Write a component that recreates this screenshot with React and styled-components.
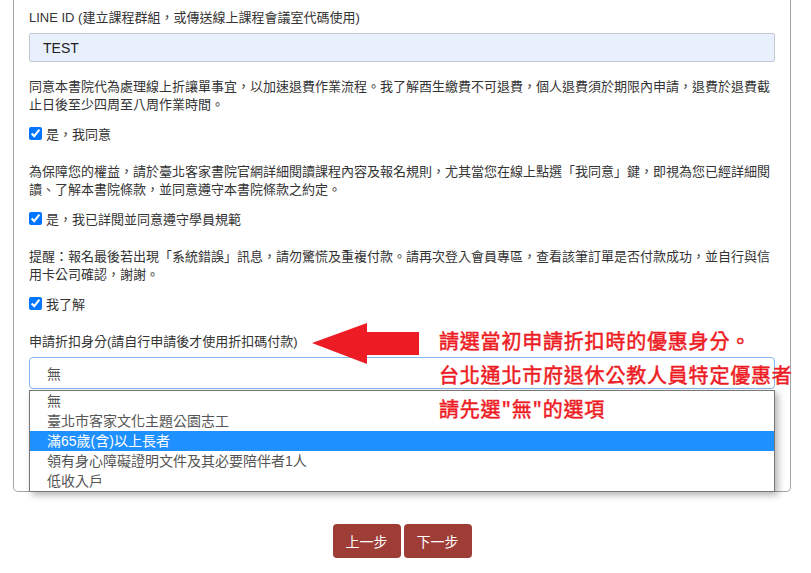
import React from 'react'
import styled, { createGlobalStyle } from 'styled-components'

const GlobalStyle = createGlobalStyle`
body {
  margin: 0;
  background: #fff;
  font-family: "Liberation Sans", "Noto Sans CJK TC", sans-serif;
  color: #333;
}
`

const options = [
  '無',
  '臺北市客家文化主題公園志工',
  '滿65歲(含)以上長者',
  '領有身心障礙證明文件及其必要陪伴者1人',
  '低收入戶',
]

const App = () => {
  return (
    <Page>
      <GlobalStyle />
      <Card>
        <Group>
          <Label>LINE ID (建立課程群組，或傳送線上課程會議室代碼使用)</Label>
          <TextInput defaultValue="TEST" />
        </Group>

        <Notice>
          同意本書院代為處理線上折讓單事宜，以加速退費作業流程。我了解酉生繳費不可退費，個人退費須於期限內申請，退費於退費截止日後至少四周至八周作業時間。
        </Notice>
        <Check>
          <input type="checkbox" defaultChecked />
          <span>是，我同意</span>
        </Check>

        <Notice>
          為保障您的權益，請於臺北客家書院官網詳細閱讀課程內容及報名規則，尤其當您在線上點選「我同意」鍵，即視為您已經詳細閱讀、了解本書院條款，並同意遵守本書院條款之約定。
        </Notice>
        <Check>
          <input type="checkbox" defaultChecked />
          <span>是，我已詳閱並同意遵守學員規範</span>
        </Check>

        <Notice>
          提醒：報名最後若出現「系統錯誤」訊息，請勿驚慌及重複付款。請再次登入會員專區，查看該筆訂單是否付款成功，並自行與信用卡公司確認，謝謝。
        </Notice>
        <Check>
          <input type="checkbox" defaultChecked />
          <span>我了解</span>
        </Check>

        <Group last>
          <Label>申請折扣身分(請自行申請後才使用折扣碼付款)</Label>
          <SelectWrap>
            <SelectBox>無</SelectBox>
            <OptionList>
              {options.map((o, i) => (
                <Option key={o} active={i === 2}>{o}</Option>
              ))}
            </OptionList>
          </SelectWrap>
        </Group>

        <Arrow width="108" height="42" viewBox="0 0 108 42">
          <polygon points="0,20 55,0 55,9 107,9 107,32 55,32 55,41" fill="#ed1c24" />
        </Arrow>
        <Notes>
          <Note>請選當初申請折扣時的優惠身分。</Note>
          <Note>台北通北市府退休公教人員特定優惠者</Note>
          <Note>請先選"無"的選項</Note>
        </Notes>
      </Card>

      <Buttons>
        <StepButton>上一步</StepButton>
        <StepButton>下一步</StepButton>
      </Buttons>
    </Page>
  )
}

const Page = styled.div`
width: 811px;
min-height: 573px;
overflow: hidden;
`

const Card = styled.div`
position: relative;
box-sizing: border-box;
width: 778px;
margin-left: 13px;
padding: 9px 15px 102px;
border: 1px solid #a3a3a3;
border-top: 0;
border-radius: 0 0 5px 5px;
`

const Group = styled.div`
display: flex;
flex-direction: column;
margin-bottom: ${p => (p.last ? '0' : '16px')};
`

const Label = styled.div`
font-size: 13px;
line-height: 18px;
margin-bottom: 6px;
color: #333;
`

const TextInput = styled.input`
box-sizing: border-box;
height: 29px;
width: 100%;
padding: 0 13px;
border: 1px solid #c3c9d1;
border-radius: 2px;
background: #e8f0fe;
font-family: "Liberation Sans", sans-serif;
font-size: 14px;
color: #222;
outline: none;
`

const Notice = styled.p`
margin: 0 0 10px;
font-size: 13px;
line-height: 18px;
color: #333;
text-spacing-trim: space-all;
`

const Check = styled.label`
display: flex;
align-items: center;
height: 18px;
margin-bottom: 21px;
font-size: 13px;
color: #333;
input {
  width: 13px;
  height: 13px;
  margin: 0 4px 0 0;
}
`

const SelectWrap = styled.div`
position: relative;
`

const SelectBox = styled.div`
box-sizing: border-box;
height: 32px;
padding: 0 17px;
display: flex;
align-items: center;
border: 1px solid #86b7f0;
border-radius: 4px;
font-size: 14px;
color: #555;
`

const OptionList = styled.div`
position: absolute;
top: 33px;
left: 0;
right: 0;
z-index: 2;
background: #fff;
border: 1px solid #777;
box-shadow: 3px 3px 7px rgba(0, 0, 0, 0.3);
`

const Option = styled.div`
height: 20px;
line-height: 20px;
padding-left: 17px;
font-size: 14px;
color: ${p => (p.active ? '#fff' : '#555')};
background: ${p => (p.active ? '#1e90ff' : '#fff')};
`

const Arrow = styled.svg`
position: absolute;
left: 298px;
top: 323px;
z-index: 3;
`

const Notes = styled.div`
position: absolute;
left: 425px;
top: 324px;
z-index: 3;
display: flex;
flex-direction: column;
`

const Note = styled.div`
height: 34px;
line-height: 34px;
white-space: nowrap;
font-family: "Noto Sans CJK TC", sans-serif;
font-size: 20px;
font-weight: normal;
-webkit-text-stroke: 0.5px #ed1c24;
letter-spacing: 0.8px;
color: #ed1c24;
`

const Buttons = styled.div`
width: 778px;
margin: 32px 0 0 13px;
display: flex;
justify-content: center;
gap: 3px;
`

const StepButton = styled.button`
width: 68px;
height: 34px;
border: 0;
border-radius: 4px;
background: #9e3d36;
color: #fff;
font-family: "Liberation Sans", "Noto Sans CJK TC", sans-serif;
font-size: 14px;
`

export default App
